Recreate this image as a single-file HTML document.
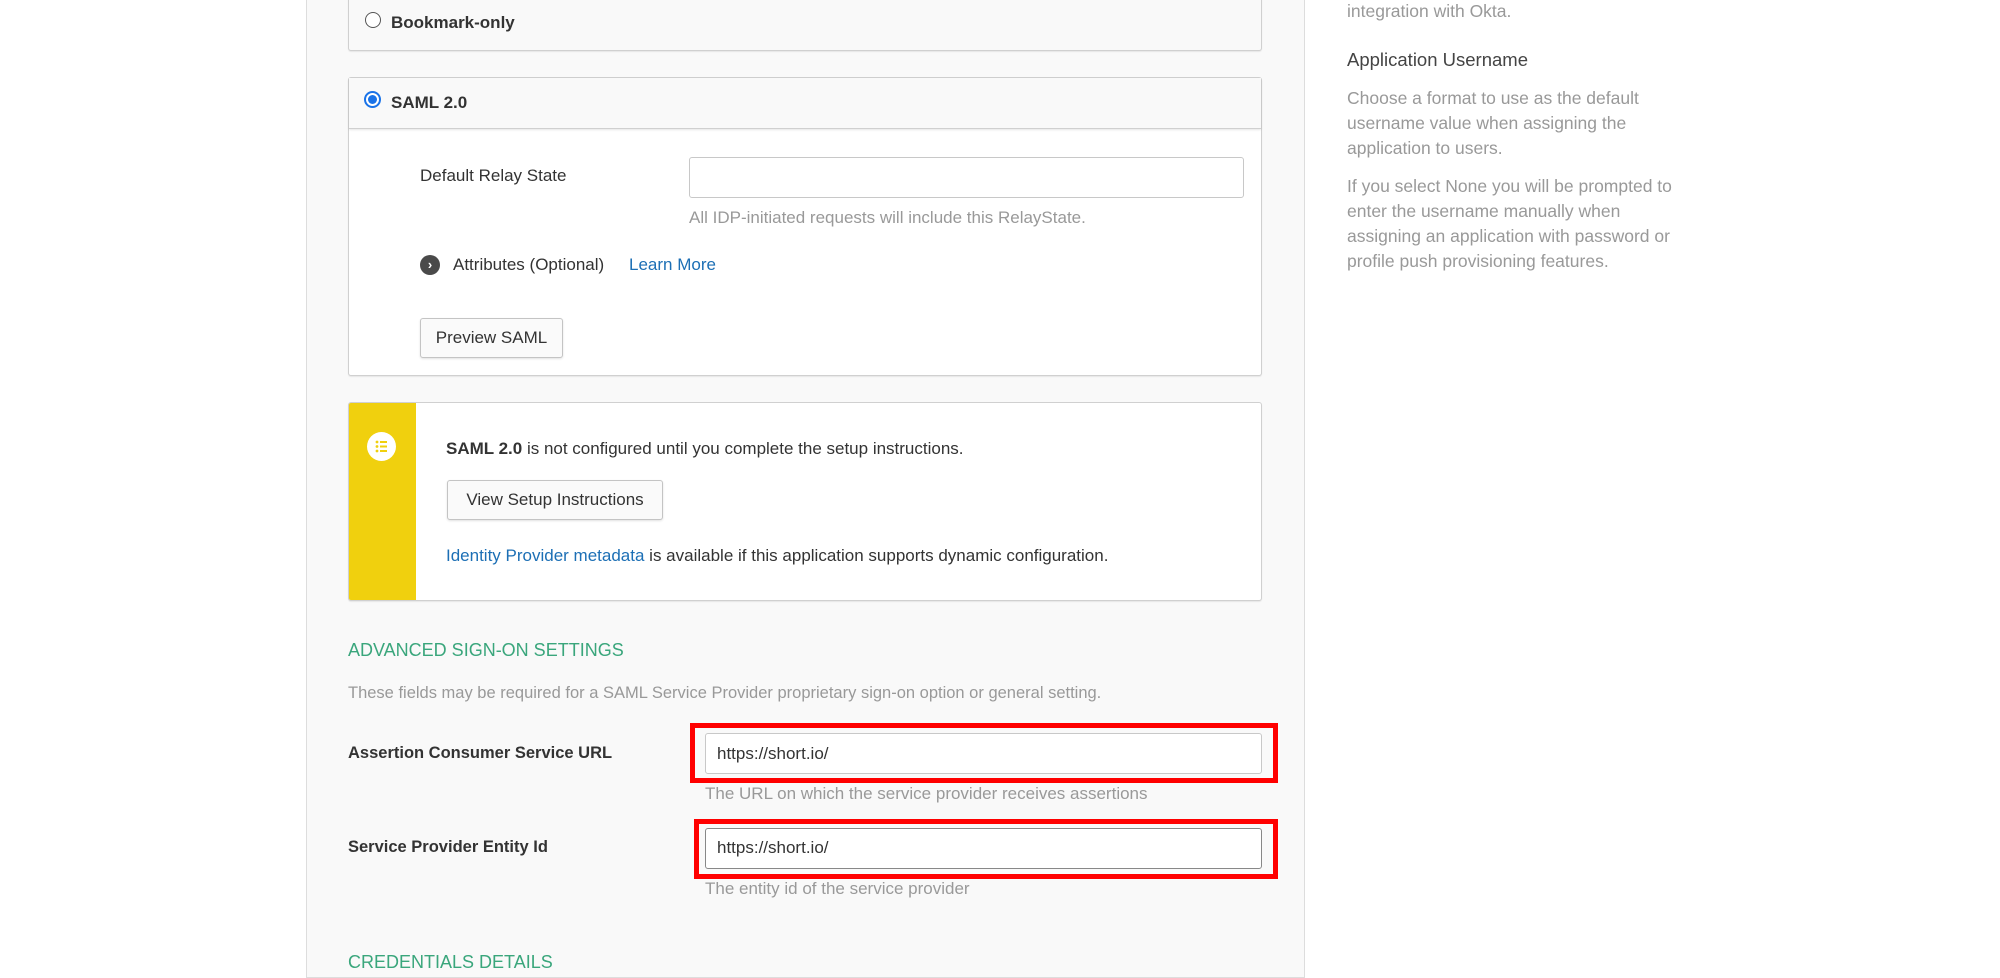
<!DOCTYPE html>
<html><head><meta charset="utf-8"><style>
*{box-sizing:border-box;margin:0;padding:0}
body{width:2000px;height:972px;overflow:hidden;background:#fff;font-family:"Liberation Sans",sans-serif;color:#333;font-size:17px;position:relative}
.a{position:absolute;white-space:nowrap}
.panel{position:absolute;left:306px;top:-2px;width:999px;height:980px;background:#f9f9f9;border:1px solid #ddd}
.box{position:absolute;border:1px solid #d0d0d0;border-radius:3px;background:#fff;box-shadow:0 1px 1px rgba(0,0,0,.08)}
.inp{position:absolute;background:#fff;border:1px solid #c8c8c8;border-radius:3px}
.btn{position:absolute;background:#fafafa;border:1px solid #c4c4c4;border-radius:3px;box-shadow:0 1px 2px rgba(0,0,0,.12);font-size:17px;color:#333;display:flex;align-items:center;justify-content:center}
.muted{color:#999}
.link{color:#1c6fb5}
.green{color:#3aa67c;font-size:18px}
.red{position:absolute;border:5px solid #f00}
</style></head><body>
<div class="panel"></div>
<div class="box" style="left:348px;top:-5px;width:914px;height:56px;background:#f9f9f9"></div>
<div class="a" style="left:365px;top:12px;width:16px;height:16px;border:1px solid #555;border-radius:50%;background:#fff"></div>
<div class="a" style="left:391px;top:13px;font-weight:bold;font-size:17px">Bookmark-only</div>

<div class="box" style="left:348px;top:77px;width:914px;height:299px"></div>
<div class="a" style="left:349px;top:78px;width:912px;height:51px;background:#f9f9f9;border-bottom:1px solid #d0d0d0;box-shadow:0 1px 2px rgba(0,0,0,.1)"></div>
<div class="a" style="left:364px;top:91px;width:17px;height:17px;border:2px solid #1a73e8;border-radius:50%;background:#fff"></div>
<div class="a" style="left:368px;top:95px;width:9px;height:9px;border-radius:50%;background:#1a73e8"></div>
<div class="a" style="left:391px;top:93px;font-weight:bold;font-size:17px">SAML 2.0</div>
<div class="a" style="left:420px;top:166px">Default Relay State</div>
<div class="inp" style="left:689px;top:157px;width:555px;height:41px"></div>
<div class="a muted" style="left:689px;top:208px">All IDP-initiated requests will include this RelayState.</div>
<div class="a" style="left:420px;top:255px;width:20px;height:20px;border-radius:50%;background:#4a4a4a;color:#fff;font-size:13px;line-height:20px;text-align:center;font-weight:bold">›</div>
<div class="a" style="left:453px;top:255px">Attributes (Optional)</div>
<div class="a link" style="left:629px;top:255px">Learn More</div>
<div class="btn" style="left:420px;top:318px;width:143px;height:40px">Preview SAML</div>

<div class="box" style="left:348px;top:402px;width:914px;height:199px;overflow:hidden">
<div style="position:absolute;left:0;top:0;width:67px;height:100%;background:#f0d00e"></div>
</div>
<div class="a" style="left:367px;top:432px;width:29px;height:29px;border-radius:50%;background:#fff"></div>
<svg class="a" style="left:372px;top:437px" width="19" height="19" viewBox="0 0 19 19"><g fill="#f0d00e"><circle cx="5" cy="5" r="1.4"/><circle cx="5" cy="9.5" r="1.4"/><circle cx="5" cy="14" r="1.4"/><rect x="8" y="4" width="7" height="2"/><rect x="8" y="8.5" width="7" height="2"/><rect x="8" y="13" width="7" height="2"/></g></svg>
<div class="a" style="left:446px;top:439px"><b>SAML 2.0</b> is not configured until you complete the setup instructions.</div>
<div class="btn" style="left:447px;top:480px;width:216px;height:40px">View Setup Instructions</div>
<div class="a" style="left:446px;top:546px"><span class="link">Identity Provider metadata</span> is available if this application supports dynamic configuration.</div>

<div class="a green" style="left:348px;top:640px">ADVANCED SIGN-ON SETTINGS</div>
<div class="a muted" style="left:348px;top:684px;font-size:16.5px">These fields may be required for a SAML Service Provider proprietary sign-on option or general setting.</div>

<div class="a" style="left:348px;top:744px;font-weight:bold;font-size:16.5px">Assertion Consumer Service URL</div>
<div class="red" style="left:690px;top:723px;width:588px;height:60px"></div>
<div class="inp" style="left:705px;top:733px;width:557px;height:41px"></div>
<div class="a" style="left:717px;top:744px">https://short.io/</div>
<div class="a muted" style="left:705px;top:784px">The URL on which the service provider receives assertions</div>

<div class="a" style="left:348px;top:838px;font-weight:bold;font-size:16.5px">Service Provider Entity Id</div>
<div class="red" style="left:694px;top:819px;width:584px;height:60px"></div>
<div class="inp" style="left:705px;top:828px;width:557px;height:41px;border-color:#888"></div>
<div class="a" style="left:717px;top:838px">https://short.io/</div>
<div class="a muted" style="left:705px;top:879px">The entity id of the service provider</div>

<div class="a green" style="left:348px;top:952px">CREDENTIALS DETAILS</div>

<div class="a muted" style="left:1347px;top:1px;font-size:17.5px">integration with Okta.</div>
<div class="a" style="left:1347px;top:49px;font-size:18.5px;color:#444">Application Username</div>
<div class="a muted" style="left:1347px;top:86px;font-size:17.5px;line-height:25px;white-space:normal;width:350px">Choose a format to use as the default username value when assigning the application to users.</div>
<div class="a muted" style="left:1347px;top:174px;font-size:17.5px;line-height:25px;white-space:normal;width:350px">If you select None you will be prompted to enter the username manually when assigning an application with password or profile push provisioning features.</div>
</body></html>
